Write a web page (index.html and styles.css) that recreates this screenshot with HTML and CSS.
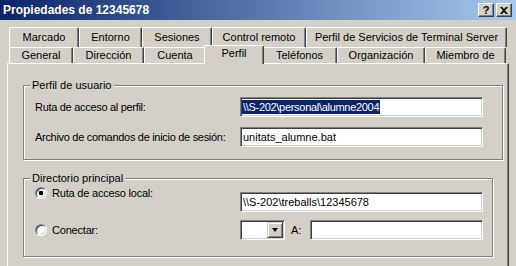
FILE: index.html
```html
<!DOCTYPE html>
<html lang="es">
<head>
    <meta charset="UTF-8">
    <title>Propiedades de 12345678</title>
    <link rel="stylesheet" href="styles.css">
</head>
<body>
    <div class="window">
        <div class="titlebar">
            <span class="title">Propiedades de 12345678</span>
            <div class="caption-btns">
                <span class="cbtn">?</span>
                <span class="cbtn">
                    <svg width="8" height="7" viewBox="0 0 8 7">
                        <path d="M0 0 L2 0 L4 2 L6 0 L8 0 L5 3.5 L8 7 L6 7 L4 5 L2 7 L0 7 L3 3.5 Z" fill="#000"/>
                    </svg>
                </span>
            </div>
        </div>

        <div class="tabs">
            <div class="tabrow back">
                <div class="tab t-marcado">Marcado</div>
                <div class="tab t-entorno">Entorno</div>
                <div class="tab t-sesiones">Sesiones</div>
                <div class="tab t-control">Control remoto</div>
                <div class="tab t-terminal">Perfil de Servicios de Terminal Server</div>
            </div>
            <div class="tabrow front">
                <div class="tab t-general">General</div>
                <div class="tab t-direccion">Dirección</div>
                <div class="tab t-cuenta">Cuenta</div>
                <div class="tab t-perfil selected">Perfil</div>
                <div class="tab t-telefonos">Teléfonos</div>
                <div class="tab t-organizacion">Organización</div>
                <div class="tab t-miembro">Miembro de</div>
            </div>
        </div>

        <div class="panel">
            <fieldset class="group user-profile">
                <legend>Perfil de usuario</legend>
                <div class="rows">
                    <label class="lbl">Ruta de acceso al perfil:</label>
                    <div class="textbox"><span class="sel">\\S-202\personal\alumne2004</span></div>

                    <label class="lbl">Archivo de comandos de inicio de sesión:</label>
                    <div class="textbox"><span class="txt">unitats_alumne.bat</span></div>
                </div>
            </fieldset>

            <fieldset class="group home-dir">
                <legend>Directorio principal</legend>
                <div class="rows">
                    <div class="option first">
                        <span class="radio checked"></span>
                        <span>Ruta de acceso local:</span>
                    </div>
                    <div class="textbox local-path"><span class="txt">\\S-202\treballs\12345678</span></div>

                    <div class="option">
                        <span class="radio"></span>
                        <span>Conectar:</span>
                    </div>
                    <div class="connect">
                        <div class="combo">
                            <span class="drop"><span class="arrow"></span></span>
                        </div>
                        <span class="to">A:</span>
                        <div class="textbox short"></div>
                    </div>
                </div>
            </fieldset>
        </div>
    </div>
</body>
</html>
```

FILE: styles.css
```css
body {
    margin: 0;
    font-family: 'Liberation Sans', Arial, sans-serif;
    font-size: 11px;
    color: #000;
}

.window {
    width: 516px;
    height: 266px;
    background: #d4d0c8;
    overflow: hidden;
}

/* barra de título */
.titlebar {
    height: 20px;
    display: flex;
    align-items: center;
    justify-content: space-between;
    padding: 0 4px 0 3px;
    background: linear-gradient(to right, #0a246a, #a6caf0);
}

.title {
    color: white;
    font-weight: bold;
    font-size: 12px;
}

.caption-btns {
    display: flex;
    gap: 2px;
}

.cbtn {
    width: 16px;
    height: 14px;
    box-sizing: border-box;
    display: flex;
    align-items: center;
    justify-content: center;
    background: #d4d0c8;
    border: 1px solid;
    border-color: #fff #404040 #404040 #fff;
    box-shadow: inset -1px -1px #808080;
    font-weight: bold;
    font-size: 11px;
}

/* pestañas */
.tabs {
    padding: 7px 0 0 9px;
}

.tabrow {
    display: flex;
}

.tabrow.back {
    height: 20px;
}

.tabrow.front {
    height: 16px;
}

.tab {
    box-sizing: border-box;
    border-left: 1px solid #fff;
    border-top: 1px solid #fff;
    border-right: 1px solid #404040;
    box-shadow: inset -1px 0 #808080;
    border-radius: 2px 2px 0 0;
    background: #d4d0c8;
    text-align: center;
    white-space: nowrap;
}

.back .tab {
    height: 20px;
    line-height: 18px;
}

.front .tab {
    height: 16px;
    line-height: 15px;
}

.t-marcado { width: 70px; }
.t-entorno { width: 63px; }
.t-sesiones { width: 70px; }
.t-control { width: 94px; }
.t-terminal { width: 201px; }

.t-general { width: 64px; }
.t-direccion { width: 71px; }
.t-cuenta { width: 62px; }
.t-telefonos { width: 75px; }
.t-organizacion { width: 88px; }
.t-miembro { width: 81px; }

.front .tab.selected {
    width: 60px;
    height: 19px;
    margin: -2px -2px 0;
    line-height: 15px;
    position: relative;
    z-index: 1;
}

/* panel */
.panel {
    margin-left: 7px;
    width: 502px;
    height: 203px;
    box-sizing: border-box;
    border-top: 1px solid #fff;
    border-left: 1px solid #fff;
    border-right: 1px solid #404040;
    box-shadow: inset -1px 0 #808080;
    padding-top: 14px;
}

.group {
    margin: 0 0 0 15px;
    padding: 0;
    border: 1px solid #808080;
    box-shadow: inset 1px 1px #fff, 1px 1px #fff;
    box-sizing: border-box;
}

.group legend {
    margin-left: 6px;
    padding: 0 2px;
    line-height: 14px;
    background: #d4d0c8;
}

.user-profile {
    width: 480px;
    padding-bottom: 12px;
}

.home-dir {
    width: 470px;
    margin-top: 11px;
    padding-bottom: 16px;
}

.rows {
    display: grid;
    grid-template-columns: 205px 243px;
    align-items: center;
    padding-left: 11px;
}

.user-profile .rows {
    padding-top: 5px;
    row-gap: 10px;
    letter-spacing: -0.3px;
}

.home-dir .rows {
    row-gap: 8px;
    letter-spacing: -0.2px;
}

.lbl {
    white-space: nowrap;
}

.textbox {
    height: 20px;
    box-sizing: border-box;
    display: flex;
    align-items: center;
    padding-left: 1px;
    background: #fff;
    border: 1px solid;
    border-color: #808080 #fff #fff #808080;
    box-shadow: inset 1px 1px #404040, inset -1px -1px #d4d0c8;
    letter-spacing: 0;
    white-space: nowrap;
}

.sel {
    background: #0a246a;
    color: white;
    line-height: 14px;
    padding: 0 1px;
    letter-spacing: -0.3px;
}

.txt {
    padding-left: 1px;
}

.option {
    display: flex;
    align-items: center;
    gap: 5px;
}

.option.first {
    align-self: start;
    line-height: 14px;
    margin-top: 1px;
}

.local-path {
    align-self: start;
    margin-top: 7px;
}

.radio {
    width: 12px;
    height: 12px;
    box-sizing: border-box;
    border-radius: 50%;
    background: #fff;
    border: 1px solid;
    border-color: #808080 #fff #fff #808080;
    box-shadow: inset 1px 1px #404040, inset -1px -1px #d4d0c8;
}

.radio.checked {
    background: radial-gradient(circle, #000 2px, #fff 2.6px);
}

.connect {
    display: flex;
    align-items: center;
}

.combo {
    width: 45px;
    height: 20px;
    box-sizing: border-box;
    display: flex;
    justify-content: flex-end;
    padding: 1px;
    background: #fff;
    border: 1px solid;
    border-color: #808080 #fff #fff #808080;
    box-shadow: inset 1px 1px #404040, inset -1px -1px #d4d0c8;
}

.drop {
    width: 16px;
    height: 16px;
    box-sizing: border-box;
    display: flex;
    align-items: center;
    justify-content: center;
    background: #d4d0c8;
    border: 1px solid;
    border-color: #d4d0c8 #404040 #404040 #d4d0c8;
    box-shadow: inset 1px 1px #fff, inset -1px -1px #808080;
}

.arrow {
    width: 0;
    height: 0;
    border-left: 3.5px solid transparent;
    border-right: 3.5px solid transparent;
    border-top: 4px solid #000;
}

.to {
    margin-left: 6px;
    width: 19px;
}

.textbox.short {
    width: 173px;
}
```
